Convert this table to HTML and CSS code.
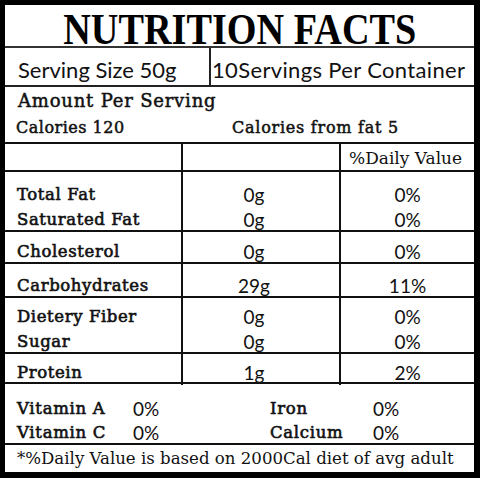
FILE: index.html
```html
<!DOCTYPE html>
<html lang="en">
<head>
    <meta charset="UTF-8">
    <title>Nutrition Facts</title>
    <link rel="stylesheet" href="styles.css">
</head>
<body>
    <div class="label">
        <div class="title"><span>NUTRITION FACTS</span></div>

        <div class="serving">
            <div class="serving-size">Serving Size 50g</div>
            <div class="serving-count">10Servings Per Container</div>
        </div>

        <div class="amount">
            <div class="amount-title">Amount Per Serving</div>
            <div class="calories">
                <span class="cal-total">Calories 120</span>
                <span class="cal-fat">Calories from fat 5</span>
            </div>
        </div>

        <!-- nutrient table -->
        <div class="row head-row">
            <div class="cell"></div>
            <div class="cell"></div>
            <div class="cell dv">%Daily Value</div>
        </div>
        <div class="row fat-row">
            <div class="cell name">Total Fat<br>Saturated Fat</div>
            <div class="cell num">0g<br>0g</div>
            <div class="cell num">0%<br>0%</div>
        </div>
        <div class="row chol-row">
            <div class="cell name">Cholesterol</div>
            <div class="cell num">0g</div>
            <div class="cell num">0%</div>
        </div>
        <div class="row carb-row">
            <div class="cell name">Carbohydrates</div>
            <div class="cell num">29g</div>
            <div class="cell num">11%</div>
        </div>
        <div class="row fiber-row">
            <div class="cell name">Dietery Fiber<br>Sugar</div>
            <div class="cell num">0g<br>0g</div>
            <div class="cell num">0%<br>0%</div>
        </div>
        <div class="row protein-row">
            <div class="cell name">Protein</div>
            <div class="cell num">1g</div>
            <div class="cell num">2%</div>
        </div>

        <div class="vitamins">
            <div class="vit-name">Vitamin A</div><div class="vit-val">0%</div>
            <div class="vit-name">Iron</div><div class="vit-val">0%</div>
            <div class="vit-name">Vitamin C</div><div class="vit-val">0%</div>
            <div class="vit-name">Calcium</div><div class="vit-val">0%</div>
        </div>

        <div class="footnote">*%Daily Value is based on 2000Cal diet of avg adult</div>
    </div>
</body>
</html>
```

FILE: styles.css
```css
* {
    margin: 0;
    padding: 0;
    box-sizing: border-box;
}

body {
    background: #000;
    width: 480px;
    height: 478px;
    overflow: hidden;
}

.label {
    width: 480px;
    height: 478px;
    background: #fff;
    border: solid #000;
    border-width: 5px 6px 6px 5px;
    color: #111;
    font-family: "DejaVu Serif", serif;
    display: flex;
    flex-direction: column;
}

.title {
    height: 43px;
    border-bottom: 2px solid #333;
    text-align: center;
}

.title span {
    display: inline-block;
    font-family: "Liberation Serif", serif;
    font-weight: bold;
    font-size: 45px;
    line-height: 42px;
    transform: scaleX(0.85);
    transform-origin: center;
    padding-top: 3px;
    color: #000;
}

.serving {
    height: 39px;
    border-bottom: 2px solid #222;
    display: flex;
    font-family: Lato, sans-serif;
    font-size: 22px;
}

.serving-size {
    width: 206px;
    padding: 8px 0 0 13px;
    border-right: 2px solid #222;
}

.serving-count {
    flex: 1;
    padding: 8px 0 0 1px;
    letter-spacing: 0.35px;
}

.amount {
    height: 57px;
    border-bottom: 2px solid #111;
    padding: 2px 0 0 13px;
}

.amount-title {
    font-size: 18px;
    line-height: 24px;
    letter-spacing: 0.8px;
    -webkit-text-stroke: 0.5px #111;
}

.calories {
    display: flex;
    font-size: 16px;
    line-height: 29px;
    -webkit-text-stroke: 0.5px #111;
}

.cal-total {
    width: 216px;
    margin-left: -2px;
    letter-spacing: 0.5px;
}

.cal-fat {
    letter-spacing: 0.75px;
}

.row {
    display: grid;
    grid-template-columns: 176px 158px 1fr;
    border-bottom: 2px solid #111;
}

.cell {
    border-left: 2px solid #111;
}

.cell:first-child {
    border-left: none;
}

.head-row { height: 28px; }
.fat-row { height: 60px; }
.chol-row { height: 32px; }
.carb-row { height: 34px; }
.fiber-row { height: 56px; }
.protein-row { height: 30px; }

.dv {
    font-size: 17px;
    padding: 4px 0 0 8px;
}

.name {
    font-size: 16.5px;
    letter-spacing: 0.6px;
    -webkit-text-stroke: 0.6px #111;
    line-height: 25px;
    padding-left: 12px;
}

.num {
    font-family: Lato, sans-serif;
    font-size: 19px;
    line-height: 25px;
    text-align: center;
}

.fat-row .cell { padding-top: 10px; }
.chol-row .cell { padding-top: 7px; }
.carb-row .cell { padding-top: 9px; }
.fiber-row .cell { padding-top: 6px; }
.protein-row .cell { padding-top: 6px; }

.row .num:nth-child(2) {
    padding-right: 14px;
}

.vitamins {
    height: 61px;
    border-bottom: 2px solid #111;
    display: grid;
    grid-template-columns: 116px 137px 103px 1fr;
    padding: 13px 0 0 12px;
    line-height: 24px;
}

.vit-name {
    font-size: 16.5px;
    letter-spacing: 0.7px;
    -webkit-text-stroke: 0.6px #111;
}

.vit-val {
    font-family: Lato, sans-serif;
    font-size: 19px;
}

.footnote {
    flex: 1;
    font-size: 16.6px;
    padding: 4px 0 0 12px;
    white-space: nowrap;
}
```
